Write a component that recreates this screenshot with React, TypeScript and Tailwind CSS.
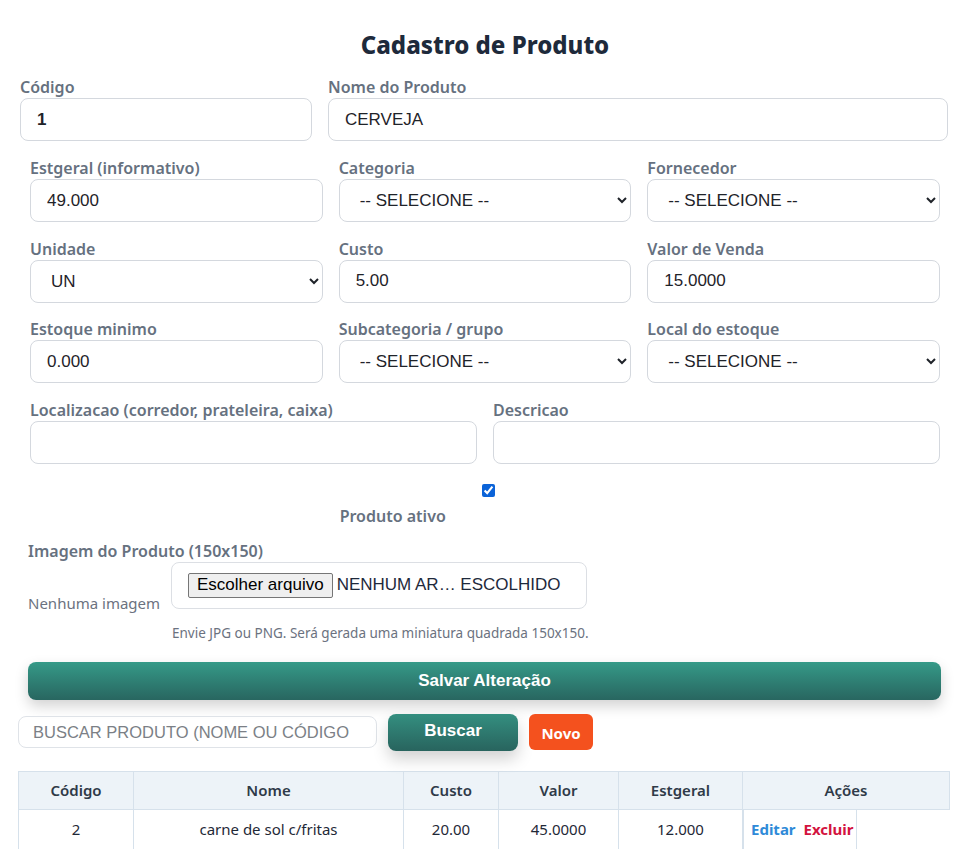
import { ReactNode } from "react";

const ui = "font-['Noto_Sans',sans-serif]";
const arial = "font-['Liberation_Sans',Arial,sans-serif]";

const Label = ({ children }: { children: ReactNode }) => (
  <label className={`block text-[16px] leading-[20px] font-semibold text-[#66717f] ${ui}`}>{children}</label>
);

const TextField = ({ label, value, bold }: { label: string; value: string; bold?: boolean }) => (
  <div>
    <Label>{label}</Label>
    <input
      readOnly
      value={value}
      className={`mt-px h-[43px] w-full rounded-lg border border-[#d4d8de] bg-white px-4 text-[17px] text-[#1f2329] outline-none ${arial} ${bold ? "font-bold" : ""}`}
    />
  </div>
);

const SelectField = ({ label, value }: { label: string; value: string }) => (
  <div>
    <Label>{label}</Label>
    <select
      defaultValue={value}
      className={`mt-px h-[43px] w-full rounded-lg border border-[#d4d8de] bg-white pl-4 pr-2 text-[17px] text-[#1f2329] outline-none ${arial}`}
    >
      <option>{value}</option>
    </select>
  </div>
);

const cols = [
  { name: "Código", w: "w-[115px]" },
  { name: "Nome", w: "w-[270px]" },
  { name: "Custo", w: "w-[95px]" },
  { name: "Valor", w: "w-[120px]" },
  { name: "Estgeral", w: "w-[124px]" },
  { name: "Ações", w: "" },
];

const row = ["2", "carne de sol c/fritas", "20.00", "45.0000", "12.000"];

export default function App() {
  return (
    <div className={`min-h-screen w-[970px] bg-white ${ui}`}>
      <h1 className="pt-[29px] text-center text-[24px] leading-[32px] font-extrabold text-[#1e2a3b]">
        Cadastro de Produto
      </h1>

      <div className="mx-[20px] mt-[16px] grid grid-cols-[292px_1fr] gap-4 pr-[2px]">
        <TextField label="Código" value="1" bold />
        <TextField label="Nome do Produto" value="CERVEJA" />
      </div>

      <div className="mx-[30px] mt-[17px] grid grid-cols-3 gap-x-4 gap-y-[16.5px]">
        <TextField label="Estgeral (informativo)" value="49.000" />
        <SelectField label="Categoria" value="-- SELECIONE --" />
        <SelectField label="Fornecedor" value="-- SELECIONE --" />
        <SelectField label="Unidade" value="UN" />
        <TextField label="Custo" value="5.00" />
        <TextField label="Valor de Venda" value="15.0000" />
        <TextField label="Estoque minimo" value="0.000" />
        <SelectField label="Subcategoria / grupo" value="-- SELECIONE --" />
        <SelectField label="Local do estoque" value="-- SELECIONE --" />
      </div>

      <div className="mx-[30px] mt-[16.5px] grid grid-cols-2 gap-4">
        <TextField label="Localizacao (corredor, prateleira, caixa)" value="" />
        <TextField label="Descricao" value="" />
      </div>

      <div className="mx-[30px] mt-[20px] grid grid-cols-3 gap-4">
        <div />
        <div>
          <div className="flex justify-center pl-[8px]">
            <input type="checkbox" defaultChecked className="m-0 h-[13px] w-[13px] accent-[#0b63d8]" />
          </div>
          <div className="mt-[9px] pl-px text-[16px] leading-[20px] font-semibold text-[#66717f]">Produto ativo</div>
        </div>
      </div>

      <div className="mx-[28px] mt-[15px]">
        <Label>Imagem do Produto (150x150)</Label>
        <div className="mt-[1px] flex items-end">
          <div className="w-[143px] translate-y-[3px] text-[15px] leading-[20px] text-[#6b7280]">Nenhuma imagem</div>
          <div className="mb-px flex h-[47px] w-[416px] items-center rounded-lg border border-[#dcdfe4] pl-4">
            <span
              className={`flex h-[25px] items-center rounded-[2px] border border-[#767676] bg-[#efefef] px-[8px] text-[17px] text-black ${arial}`}
            >
              Escolher arquivo
            </span>
            <span className={`ml-[4px] text-[17px] text-[#1e293b] ${arial}`}>NENHUM AR… ESCOLHIDO</span>
          </div>
        </div>
        <p className="mt-[14px] ml-[144px] text-[13.5px] leading-[18px] text-[#6b7280]">
          Envie JPG ou PNG. Será gerada uma miniatura quadrada 150x150.
        </p>
      </div>

      <button
        className={`mx-[28px] mt-[20px] h-[38px] w-[913px] rounded-lg bg-gradient-to-b from-[#359a88] to-[#286660] text-[17px] font-bold text-white shadow-[0_6px_14px_rgba(0,0,0,0.18)] ${arial}`}
      >
        Salvar Alteração
      </button>

      <div className="mx-[18px] mt-[14px] flex items-center gap-[11px]">
        <input
          readOnly
          placeholder="BUSCAR PRODUTO (NOME OU CÓDIGO"
          className={`h-[32px] w-[359px] rounded-lg border border-[#dfe3e8] px-[14px] text-[16.5px] placeholder:text-[#7b7f86] outline-none ${arial}`}
        />
        <button
          className={`h-[37px] w-[130px] rounded-lg bg-gradient-to-b from-[#348f80] to-[#28645e] pb-[3px] text-[17px] font-bold text-white shadow-[0_8px_16px_rgba(0,0,0,0.18)] ${arial}`}
        >
          Buscar
        </button>
        <button className="h-[36px] w-[64px] rounded-md bg-[#f4511e] pt-[2px] text-[15px] font-bold text-white">
          Novo
        </button>
      </div>

      <table className="mx-[18px] mt-[20px] w-[932px] border-collapse text-[15px]">
        <thead>
          <tr className="h-[38px] bg-[#edf3f8]">
            {cols.map((c) => (
              <th key={c.name} className={`${c.w} border border-[#d6e1eb] font-semibold text-[#2f3a48]`}>
                {c.name}
              </th>
            ))}
          </tr>
        </thead>
        <tbody>
          <tr className="h-[40px]">
            {row.map((v, i) => (
              <td key={i} className="border border-[#d6e1eb] text-center text-[#1f2937]">
                {v}
              </td>
            ))}
            <td className="p-0 align-top">
              <div className="flex h-[40px] w-[114px] items-center gap-[8px] border-x border-b border-[#d6e1eb] pl-[7px] font-bold">
                <span className="text-[#2f8ad8]">Editar</span>
                <span className="text-[#d3143f]">Excluir</span>
              </div>
            </td>
          </tr>
        </tbody>
      </table>
    </div>
  );
}
